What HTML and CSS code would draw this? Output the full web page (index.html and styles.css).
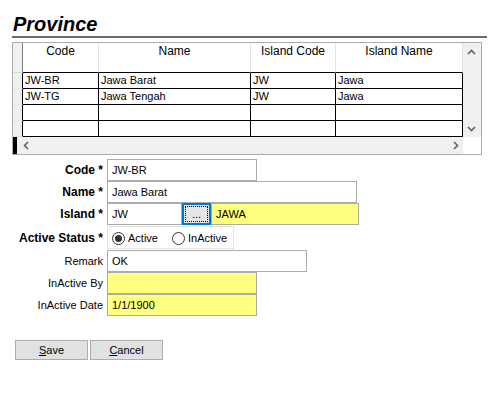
FILE: index.html
```html
<!DOCTYPE html>
<html>
<head>
<meta charset="utf-8">
<title>Province</title>
<link rel="stylesheet" href="styles.css">
</head>
<body>
<div class="page">
  <h1 class="title">Province</h1>
  <div class="grid">
    <div class="grid-main">
      <div class="table">
        <div class="row head">
          <div class="rh"></div>
          <div class="c c1">Code</div>
          <div class="c c2">Name</div>
          <div class="c c3">Island Code</div>
          <div class="c c4">Island Name</div>
        </div>
        <div class="row">
          <div class="rh"></div>
          <div class="c c1">JW-BR</div>
          <div class="c c2">Jawa Barat</div>
          <div class="c c3">JW</div>
          <div class="c c4">Jawa</div>
        </div>
        <div class="row">
          <div class="rh"></div>
          <div class="c c1">JW-TG</div>
          <div class="c c2">Jawa Tengah</div>
          <div class="c c3">JW</div>
          <div class="c c4">Jawa</div>
        </div>
        <div class="row">
          <div class="rh"></div>
          <div class="c c1"></div>
          <div class="c c2"></div>
          <div class="c c3"></div>
          <div class="c c4"></div>
        </div>
        <div class="row">
          <div class="rh"></div>
          <div class="c c1"></div>
          <div class="c c2"></div>
          <div class="c c3"></div>
          <div class="c c4"></div>
        </div>
      </div>
      <div class="vscroll">
        <svg class="arrow" width="9" height="6" viewBox="0 0 9 6"><polyline points="1,5 4.5,1.5 8,5" fill="none" stroke="#606060" stroke-width="1.6"/></svg>
        <svg class="arrow" width="9" height="6" viewBox="0 0 9 6"><polyline points="1,1 4.5,4.5 8,1" fill="none" stroke="#606060" stroke-width="1.6"/></svg>
      </div>
    </div>
    <div class="grid-foot">
      <div class="hscroll">
        <span class="thumb"></span>
        <svg class="arrow left" width="6" height="9" viewBox="0 0 6 9"><polyline points="5,1 1.5,4.5 5,8" fill="none" stroke="#606060" stroke-width="1.6"/></svg>
        <svg class="arrow right" width="6" height="9" viewBox="0 0 6 9"><polyline points="1,1 4.5,4.5 1,8" fill="none" stroke="#606060" stroke-width="1.6"/></svg>
      </div>
      <div class="corner"></div>
    </div>
  </div>

  <div class="form">
    <div class="label req">Code *</div>
    <div class="ctl"><input class="field w150" type="text" value="JW-BR"></div>

    <div class="label req">Name *</div>
    <div class="ctl"><input class="field w250" type="text" value="Jawa Barat"></div>

    <div class="label req">Island *</div>
    <div class="ctl island">
      <input class="field w75" type="text" value="JW">
      <button class="lookup" type="button"><span class="focus">...</span></button>
      <input class="field w148 ro" type="text" value="JAWA">
    </div>

    <div class="label req">Active Status *</div>
    <div class="ctl">
      <div class="radios">
        <span class="radio on"></span><span class="rtext">Active</span>
        <span class="radio second"></span><span class="rtext">InActive</span>
      </div>
    </div>

    <div class="label">Remark</div>
    <div class="ctl"><input class="field w200" type="text" value="OK"></div>

    <div class="label">InActive By</div>
    <div class="ctl"><input class="field w150 ro" type="text" value=""></div>

    <div class="label">InActive Date</div>
    <div class="ctl"><input class="field w150 ro" type="text" value="1/1/1900"></div>
  </div>

  <div class="buttons">
    <button class="btn" type="button"><u>S</u>ave</button>
    <button class="btn" type="button"><u>C</u>ancel</button>
  </div>
</div>
</body>
</html>
```

FILE: styles.css
```css
* {
  box-sizing: border-box;
}

body {
  margin: 0;
  background: #ffffff;
  color: #000000;
  font-family: "Liberation Sans", Arial, sans-serif;
  font-size: 11px;
}

.page {
  padding: 12px 0 0 12px;
}

.title {
  margin: 0;
  width: 475px;
  padding-left: 1px;
  font-size: 20px;
  line-height: 24px;
  font-weight: bold;
  font-style: italic;
  border-bottom: 2px solid #6b6b6b;
}

/* ---------- data grid ---------- */
.grid {
  margin-top: 4px;
  width: 470px;
  border: 1px solid #ababab;
}

.grid-main {
  display: flex;
}

.table {
  width: 450px;
}

.row {
  display: flex;
  height: 16px;
}

.row.head {
  height: 30px;
}

.rh {
  width: 10px;
  background: #f0f0f0;
  border-right: 1px solid #000000;
  border-bottom: 1px solid #e4e4e4;
}

.head .rh {
  border-right: 1px solid #7a7a7a;
  border-bottom: 1px solid #d8d8d8;
}

.c {
  border-right: 1px solid #000000;
  border-bottom: 1px solid #000000;
  padding-left: 2px;
  line-height: 15px;
  white-space: nowrap;
  overflow: hidden;
}

.head .c {
  border-right-color: #e3e3e3;
  text-align: center;
  font-size: 12px;
  line-height: 14px;
  padding: 1px 0 0 0;
}

.c1 { width: 76px; }
.c2 { width: 152px; }
.c3 { width: 85px; }
.c4 { width: 127px; }

.vscroll {
  width: 18px;
  background: #f0f0f0;
  display: flex;
  flex-direction: column;
  justify-content: space-between;
  align-items: center;
  padding: 6px 1px 5px 0;
}

.arrow {
  display: block;
}

.grid-foot {
  display: flex;
  height: 17px;
}

.hscroll {
  width: 450px;
  background: #f0f0f0;
  display: flex;
  align-items: center;
}

.thumb {
  width: 4px;
  height: 17px;
  background: #000000;
}

.arrow.left {
  margin-left: 6px;
}

.arrow.right {
  margin-left: auto;
  margin-right: 4px;
}

.corner {
  width: 18px;
  background: #ffffff;
}

/* ---------- form ---------- */
.form {
  margin-top: 4px;
  display: grid;
  grid-template-columns: 91px 1fr;
  grid-template-rows: 22px 22px 22px 25px 22px 22px 22px;
  column-gap: 4px;
}

.label {
  align-self: center;
  text-align: right;
  white-space: nowrap;
  font-size: 11px;
}

.label.req {
  font-weight: bold;
  font-size: 12px;
}

.ctl {
  display: flex;
  align-items: center;
}

.field {
  height: 22px;
  margin: 0;
  border: 1px solid #ababab;
  padding: 0 4px;
  background: #ffffff;
  font-family: "Liberation Sans", Arial, sans-serif;
  font-size: 11px;
  color: #000000;
  outline: none;
}

.field.ro {
  background: #ffff80;
}

.w75 { width: 75px; }
.w148 { width: 148px; }
.w150 { width: 150px; }
.w200 { width: 200px; }
.w250 { width: 250px; }

.lookup {
  width: 29px;
  height: 22px;
  margin: 0;
  padding: 2px;
  border: 1px solid #0078d7;
  box-shadow: inset 0 0 0 1px #0078d7;
  background: #e5e5e5;
  font-family: "Liberation Sans", Arial, sans-serif;
  font-size: 11px;
  color: #000000;
  display: flex;
}

.focus {
  flex: 1;
  border: 1px dotted #000000;
  line-height: 14px;
  text-align: center;
}

.radios {
  width: 127px;
  height: 23px;
  border: 1px solid #e3e3e3;
  display: flex;
  align-items: center;
  padding-left: 4px;
  font-size: 11px;
}

.radio {
  width: 13px;
  height: 13px;
  border: 1px solid #333333;
  border-radius: 50%;
  background: #ffffff;
  display: flex;
  align-items: center;
  justify-content: center;
  margin-top: 2px;
}

.radio.on::after {
  content: "";
  width: 7px;
  height: 7px;
  border-radius: 50%;
  background: #333333;
}

.radio.second {
  margin-left: 14px;
}

.rtext {
  margin-left: 3px;
}

/* ---------- buttons ---------- */
.buttons {
  margin-top: 24px;
  padding-left: 3px;
  display: flex;
  gap: 2px;
}

.btn {
  width: 73px;
  height: 20px;
  margin: 0;
  padding: 0;
  border: 1px solid #adadad;
  background: #e1e1e1;
  font-family: "Liberation Sans", Arial, sans-serif;
  font-size: 11px;
  color: #000000;
}
```
